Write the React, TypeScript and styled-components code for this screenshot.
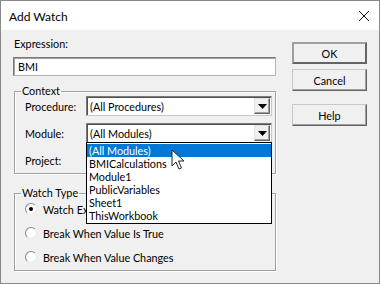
import { FC } from "react";
import styled, { createGlobalStyle } from "styled-components";

const GlobalStyle = createGlobalStyle`
  html, body {
    margin: 0;
    padding: 0;
    background: #ffffff;
  }
  body {
    font-family: Lato, "Liberation Sans", sans-serif;
    font-size: 10.8px;
    color: #000000;
  }
`;

const modules = [
  "(All Modules)",
  "BMICalculations",
  "Module1",
  "PublicVariables",
  "Sheet1",
  "ThisWorkbook",
];

const watchTypes = [
  { label: "Watch Expression", checked: true },
  { label: "Break When Value Is True", checked: false },
  { label: "Break When Value Changes", checked: false },
];

const ComboArrow: FC = () => (
  <ArrowButton>
    <svg width="9" height="5" viewBox="0 0 9 5">
      <path d="M0 0h9L4.5 5z" fill="#000" />
    </svg>
  </ArrowButton>
);

const Cursor: FC = () => (
  <CursorIcon width="14" height="22" viewBox="0 0 14 22">
    <path
      d="M1 1v16l4-4 3 7 2.5-1-3-7h5.5z"
      fill="#fff"
      stroke="#222"
      strokeWidth="1"
      strokeLinejoin="round"
    />
  </CursorIcon>
);

const App: FC = () => {
  return (
    <>
      <GlobalStyle />
      <Window>
        <TitleBar>
          <span className="title">Add Watch</span>
          <svg width="12" height="12" viewBox="0 0 12 12">
            <path d="M1 1l10 10M11 1L1 11" stroke="#111" strokeWidth="1" />
          </svg>
        </TitleBar>
        <Body>
          <LeftColumn>
            <FieldLabel>Expression:</FieldLabel>
            <TextInput>BMI</TextInput>
            <GroupBox $height={90} $gap={8}>
              <legend>Context</legend>
              <ContextRows>
                <ContextRow>
                  <RowLabel>Procedure:</RowLabel>
                  <Combo>
                    <span>(All Procedures)</span>
                    <ComboArrow />
                  </Combo>
                </ContextRow>
                <ContextRow>
                  <RowLabel>Module:</RowLabel>
                  <Combo>
                    <span>(All Modules)</span>
                    <ComboArrow />
                    <DropList>
                      {modules.map((m, i) => (
                        <DropItem key={m} $selected={i === 0}>
                          {m}
                        </DropItem>
                      ))}
                      <Cursor />
                    </DropList>
                  </Combo>
                </ContextRow>
                <ContextRow>
                  <RowLabel>Project:</RowLabel>
                </ContextRow>
              </ContextRows>
            </GroupBox>
            <GroupBox $height={85} $gap={12}>
              <legend>Watch Type</legend>
              <RadioList>
                {watchTypes.map((w) => (
                  <RadioRow key={w.label}>
                    <Radio $checked={w.checked} />
                    <span>{w.label}</span>
                  </RadioRow>
                ))}
              </RadioList>
            </GroupBox>
          </LeftColumn>
          <RightColumn>
            <DialogButton $default>OK</DialogButton>
            <DialogButton>Cancel</DialogButton>
            <DialogButton className="help">Help</DialogButton>
          </RightColumn>
        </Body>
      </Window>
    </>
  );
};

export default App;

const Window = styled.div`
  width: 380px;
  height: 284px;
  box-sizing: border-box;
  border: 1px solid #8a8a8a;
  background: #f0f0f0;
  display: flex;
  flex-direction: column;
  overflow: hidden;
`;

const TitleBar = styled.div`
  height: 29px;
  flex: none;
  background: #ffffff;
  display: flex;
  align-items: center;
  justify-content: space-between;
  padding: 0 9px 0 8px;
  .title {
    font-size: 12px;
    margin-top: 1px;
  }
`;

const Body = styled.div`
  display: flex;
  padding: 0 0 0 12px;
  gap: 16px;
`;

const LeftColumn = styled.div`
  width: 263px;
  display: flex;
  flex-direction: column;
  padding-top: 6px;
`;

const FieldLabel = styled.div`
  height: 16px;
  line-height: 16px;
  margin-left: 1px;
`;

const TextInput = styled.div`
  margin-top: 5px;
  height: 19px;
  box-sizing: border-box;
  border: 1px solid #7a7a7a;
  border-right-color: #b4b4b4;
  border-bottom-color: #b4b4b4;
  box-shadow: inset 1px 1px 0 #a0a0a0;
  background: #ffffff;
  padding: 0 4px;
  line-height: 17px;
`;

const GroupBox = styled.fieldset<{ $height: number; $gap: number }>`
  margin: ${({ $gap }) => $gap}px 0 0 1px;
  padding: 0 0 0 10px;
  height: ${({ $height }) => $height}px;
  box-sizing: border-box;
  border: 1px solid #a0a0a0;
  box-shadow: 1px 1px 0 #ffffff, inset 1px 1px 0 #ffffff;
  min-width: 0;
  width: 262px;
  legend {
    padding: 0 1px;
    margin-left: -4px;
    line-height: 14px;
  }
`;

const ContextRows = styled.div`
  display: flex;
  flex-direction: column;
  gap: 7px;
  margin-top: -2px;
`;

const ContextRow = styled.div`
  display: flex;
  align-items: center;
  height: 20px;
`;

const RowLabel = styled.div`
  width: 61px;
`;

const Combo = styled.div`
  position: relative;
  width: 186px;
  height: 20px;
  box-sizing: border-box;
  border: 1px solid #7a7a7a;
  border-right-color: #c8c8c8;
  border-bottom-color: #c8c8c8;
  box-shadow: inset 1px 1px 0 #505050;
  background: #ffffff;
  display: flex;
  align-items: center;
  justify-content: space-between;
  padding: 0 1px 0 3px;
`;

const ArrowButton = styled.div`
  width: 16px;
  height: 16px;
  box-sizing: border-box;
  background: #f0f0f0;
  border: 1px solid #e3e3e3;
  border-right-color: #646464;
  border-bottom-color: #646464;
  box-shadow: inset -1px -1px 0 #a0a0a0;
  display: flex;
  align-items: center;
  justify-content: center;
`;

const DropList = styled.div`
  position: absolute;
  left: -1px;
  top: 18px;
  width: 186px;
  box-sizing: border-box;
  border: 1px solid #000000;
  background: #ffffff;
  padding: 1px 0;
  z-index: 5;
`;

const DropItem = styled.div<{ $selected?: boolean }>`
  height: 13px;
  line-height: 13px;
  padding-left: 2px;
  white-space: nowrap;
  background: ${({ $selected }) => ($selected ? "#0078d7" : "transparent")};
  color: ${({ $selected }) => ($selected ? "#ffffff" : "#000000")};
`;

const CursorIcon = styled.svg`
  position: absolute;
  left: 84px;
  top: 6px;
`;

const RadioList = styled.div`
  display: flex;
  flex-direction: column;
  gap: 8px;
  padding-top: 1px;
`;

const RadioRow = styled.div`
  display: flex;
  align-items: center;
  gap: 6px;
  height: 16px;
`;

const Radio = styled.span<{ $checked?: boolean }>`
  position: relative;
  width: 12px;
  height: 12px;
  box-sizing: border-box;
  border-radius: 50%;
  border: 1px solid #8a8a8a;
  border-right-color: #e8e8e8;
  border-bottom-color: #e8e8e8;
  background: #ffffff;
  &::after {
    content: "";
    display: ${({ $checked }) => ($checked ? "block" : "none")};
    position: absolute;
    left: 3px;
    top: 3px;
    width: 4px;
    height: 4px;
    border-radius: 50%;
    background: #000000;
  }
`;

const RightColumn = styled.div`
  display: flex;
  flex-direction: column;
  padding-top: 12px;
  gap: 5px;
  .help {
    margin-top: 8px;
  }
`;

const DialogButton = styled.div<{ $default?: boolean }>`
  width: 75px;
  height: 22px;
  box-sizing: border-box;
  display: flex;
  align-items: center;
  justify-content: center;
  background: #f0f0f0;
  border: ${({ $default }) => ($default ? "2px" : "1px")} solid #c8c8c8;
  border-right-color: #646464;
  border-bottom-color: #646464;
  ${({ $default }) =>
    $default
      ? "border-top-color: #a0a0a0; border-left-color: #a0a0a0;"
      : "box-shadow: inset -1px -1px 0 #a0a0a0;"}
`;
